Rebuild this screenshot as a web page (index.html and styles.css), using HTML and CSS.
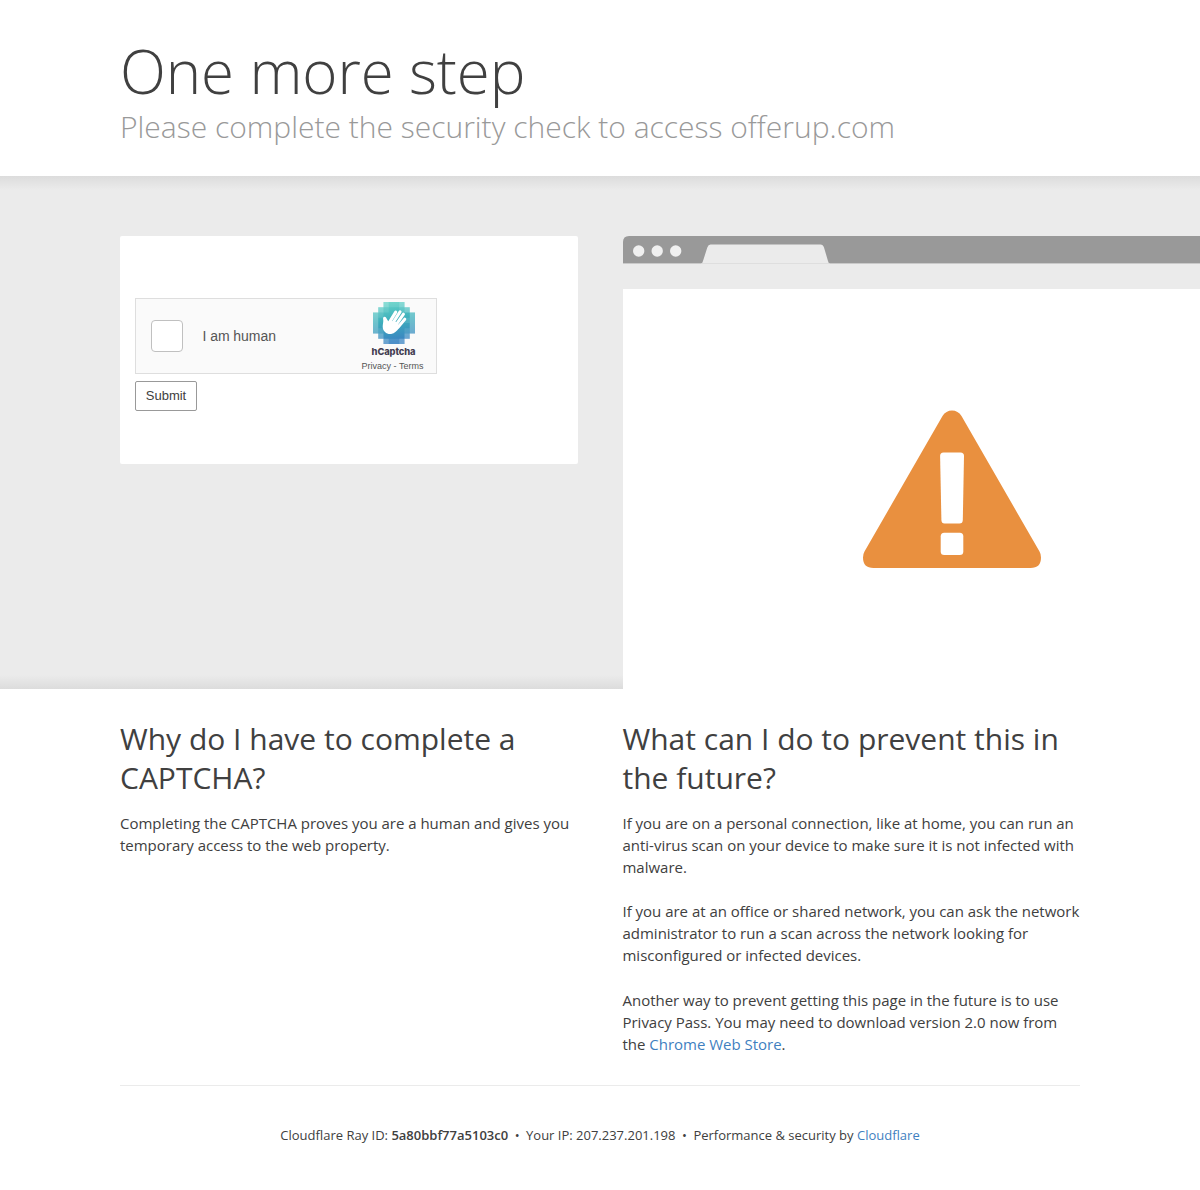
FILE: index.html
```html
<!DOCTYPE html>
<html lang="en">
<head>
<meta charset="utf-8">
<title>One more step</title>
<link rel="stylesheet" href="styles.css">
</head>
<body>
<header class="wrapper header">
  <h1>One more step</h1>
  <h2 class="subheadline">Please complete the security check to access offerup.com</h2>
</header>
<section class="highlight">
  <div class="wrapper columns">
    <form class="captcha-box">
      <div class="hcaptcha">
        <span class="checkbox"></span>
        <span class="label">I am human</span>
        <div class="brand">
          <svg class="logo" viewBox="0 0 32 32" width="42" height="42">
            <defs>
              <linearGradient id="sea" x1="0" y1="0" x2="0.15" y2="1">
                <stop offset="0" stop-color="#68d7c9"/>
                <stop offset="0.5" stop-color="#3daebb"/>
                <stop offset="1" stop-color="#3a83c2"/>
              </linearGradient>
            </defs>
            <path fill="url(#sea)" d="M8 0H24V4H28V8H32V24H28V28H24V32H8V28H4V24H0V8H4V4H8Z"/>
            <g fill="#fff">
              <path opacity=".25" d="M8 0h4v4H8zM20 0h4v4h-4zM4 4h4v4H4zM24 4h4v4h-4zM0 8h4v16H0zM28 8h4v16h-4zM4 24h4v4H4zM24 24h4v4h-4zM8 28h4v4H8zM20 28h4v4h-4z"/>
              <path opacity=".1" d="M12 0h8v4h-8zM8 4h4v4H8zM20 4h4v4h-4zM4 8h4v4H4zM24 12h4v4h-4zM4 20h4v4H4zM24 20h4v4h-4zM12 28h8v4h-8z"/>
            </g>
            <path fill="none" stroke="#fff" stroke-width="2.3" stroke-linecap="round" d="M12.5 15.5L17.3 7.7M15.2 16L20.6 7.5M17.8 17L23.2 9.3M19.2 19L24.2 13.1"/>
            <path fill="#fff" d="M11.7 14.8L9.9 11.9C9.2 10.8 7.4 11.4 7.7 12.8C8.2 15.3 7.3 17 7.4 19C7.6 22.5 10.5 24.7 13.8 24.3C16.5 24 18.3 22.2 20 19.7L18.5 15.5L13.5 14.2Z"/>
          </svg>
          <span class="brand-name">hCaptcha</span>
          <span class="legal">Privacy - Terms</span>
        </div>
      </div>
      <button class="submit" type="button">Submit</button>
    </form>
    <div class="browser">
      <div class="browser-bar">
        <svg width="640" height="28" viewBox="0 0 640 28">
          <path fill="#999" d="M0 28V6Q0 0 6 0H640V28Z"/>
          <path fill="#c9c9c9" d="M0 27H640V28H0Z"/>
          <path fill="#ebebeb" d="M78 28Q79.3 27.5 80 25L84.3 11.5Q85.3 8.5 87.5 8.5H197.500Q200 8.500 201 11.500L205 25Q205.500 27.500 207 28Z"/>
          <path fill="#dedede" d="M79 27H206V28H79Z"/>
          <g fill="#f0f0f0"><circle cx="15.700" cy="15" r="5.700"/><circle cx="34.200" cy="15" r="5.700"/><circle cx="52.700" cy="15" r="5.700"/></g>
        </svg>
      </div>
      <div class="browser-page">
        <svg width="178" height="158" viewBox="0 0 178 158">
          <path fill="#e9903f" d="M79.500 6Q83 .5 89 .5T98.500 6L176.500 141.500Q178 144 178 147.500Q178 158 167.500 158H10.500Q0 158 0 147.500Q0 144 1.500 141.500Z"/>
          <path fill="#fff" d="M80.500 42.500H97.500Q101 42.500 101 46L99.800 110Q99.700 113.500 96.500 113.500H81.500Q78.500 113.500 78.400 110L77.100 46Q77.100 42.500 80.500 42.500Z"/>
          <rect x="77.700" y="122.700" width="22.600" height="22.300" rx="3.500" fill="#fff"/>
        </svg>
      </div>
    </div>
  </div>
</section>
<section class="wrapper columns answers">
  <div>
    <h2>Why do I have to complete a CAPTCHA?</h2>
    <p>Completing the CAPTCHA proves you are a human and gives you temporary access to the web property.</p>
  </div>
  <div>
    <h2>What can I do to prevent this in the future?</h2>
    <p>If you are on a personal connection, like at home, you can run an anti-virus scan on your device to make sure it is not infected with malware.</p>
    <p>If you are at an office or shared network, you can ask the network administrator to run a scan across the network looking for misconfigured or infected devices.</p>
    <p>Another way to prevent getting this page in the future is to use Privacy Pass. You may need to download version 2.0 now from the <a href="#">Chrome Web Store</a>.</p>
  </div>
</section>
<footer class="wrapper footer">
  <span>Cloudflare Ray ID: <strong>5a80bbf77a5103c0</strong></span>
  <span class="dot">&bull;</span>
  <span>Your IP: 207.237.201.198</span>
  <span class="dot">&bull;</span>
  <span>Performance &amp; security by <a href="#">Cloudflare</a></span>
</footer>
</body>
</html>
```

FILE: styles.css
```css
* { box-sizing: border-box; }
body {
  margin: 0;
  background: #fff;
  color: #404040;
  font: 15px/22px "Open Sans", sans-serif;
  overflow-x: hidden;
}
h1, h2, p { margin: 0; }
h1 { font-size: 60px; line-height: 72px; font-weight: 300; letter-spacing: -0.1px; }
h2 { font-size: 30px; line-height: 39px; font-weight: 400; }
a { color: #3f7fbf; text-decoration: none; }
.wrapper { width: 960px; margin: 0 auto; }
.header { padding: 35px 0 30px; }
.subheadline { color: #999; font-weight: 300; white-space: nowrap; }
.highlight {
  height: 513px;
  padding-top: 60px;
  overflow: hidden;
  background:
    linear-gradient(#dcdcdc, #ebebeb) top / 100% 14px no-repeat,
    linear-gradient(#ebebeb, #dcdcdc) bottom / 100% 14px no-repeat,
    #ebebeb;
}
.columns {
  display: grid;
  grid-template-columns: 457.5px 457.5px;
  gap: 45px;
  align-items: start;
}
.captcha-box {
  height: 228px;
  padding: 62px 15px 0;
  background: #fff;
  border-radius: 2px;
  font-family: "Liberation Sans", Arial, sans-serif;
}
.hcaptcha {
  display: flex;
  align-items: center;
  width: 302px;
  height: 76px;
  padding-left: 15px;
  border: 1px solid #dedede;
  background: #fafafa;
}
.checkbox {
  width: 32px;
  height: 32px;
  border: 1px solid #c0c0c0;
  border-radius: 4px;
  background: #fff;
}
.label { margin-left: 19.5px; font-size: 14px; letter-spacing: -0.05px; color: #555; }
.brand {
  display: flex;
  flex-direction: column;
  align-items: center;
  align-self: stretch;
  width: 85px;
  margin-left: auto;
  padding-top: 3px;
}
.brand-name {
  margin-top: 1px;
  font: 800 9.3px/13px Inter, sans-serif;
  letter-spacing: -0.1px;
  color: #433d51;
}
.legal {
  margin-top: 2px;
  padding-right: 2px;
  font-size: 9px;
  line-height: 13px;
  color: #555;
  white-space: nowrap;
}
.submit {
  display: block;
  width: 62px;
  height: 30px;
  margin-top: 7px;
  padding: 0;
  border: 1px solid #999;
  border-radius: 2px;
  background: #fff;
  color: #404040;
  font: 13px/28px "Liberation Sans", Arial, sans-serif;
}
.browser { width: 640px; }
.browser-bar { height: 53px; }
.browser-bar svg { display: block; }
.browser-page {
  height: 400px;
  padding: 121px 0 0 240px;
  background: #fff;
}
.browser-page svg { display: block; }
.answers { padding: 30px 0 29.5px; border-bottom: 1px solid #ebebeb; }
.answers h2 { margin-bottom: 15px; }
.answers p { letter-spacing: -0.015px; }
.answers p + p { margin-top: 22px; }
.answers p:nth-of-type(3) { margin-top: 23px; }
.footer {
  display: flex;
  justify-content: center;
  gap: 6.5px;
  padding: 38px 0 44px;
  font-size: 13px;
  line-height: 22px;
}
.footer strong { font-weight: 600; }
```
